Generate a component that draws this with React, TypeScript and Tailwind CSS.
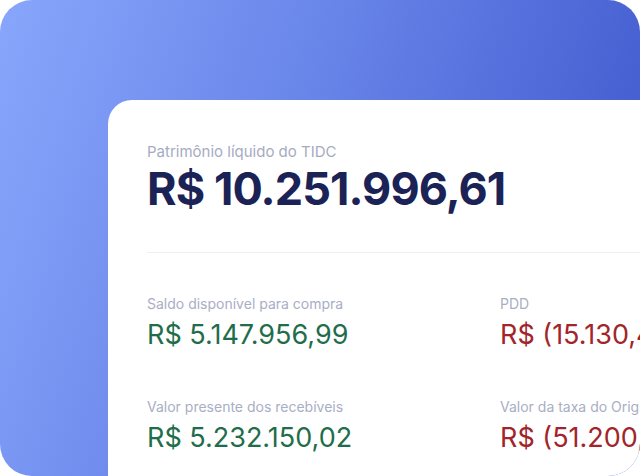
const metrics = [
  { label: "Saldo disponível para compra", value: "R$ 5.147.956,99", tone: "green" },
  { label: "PDD", value: "R$ (15.130,48)", tone: "red" },
  { label: "Valor presente dos recebíveis", value: "R$ 5.232.150,02", tone: "green" },
  { label: "Valor da taxa do Originador", value: "R$ (51.200,37)", tone: "red" },
];

export default function App() {
  return (
    <div className="h-[476px] w-[640px] overflow-hidden bg-white font-['Inter',sans-serif]">
      <div className="flex h-full flex-col overflow-hidden rounded-[32px] bg-[linear-gradient(108deg,#89a6fc_0%,#6683e8_45%,#3b52c9_100%)] pl-[108px] pt-[100px]">
        <section className="flex-1 overflow-hidden whitespace-nowrap rounded-tl-[24px] bg-white pl-[39px] pt-[42px]">
          <p className="text-[15px] leading-5 text-[#a6abc2]">Patrimônio líquido do TIDC</p>
          <p className="mt-[7px] text-[45px] font-bold leading-[40px] tracking-[-0.02em] text-[#1b2356]">
            R$ 10.251.996,61
          </p>

          <div className="mt-[43px] h-px bg-[#eef0f5]" />

          <div className="grid grid-cols-[353px_353px] gap-y-[47px] pt-[41px]">
            {metrics.map((m) => (
              <div key={m.label}>
                <p className="text-[14px] leading-5 text-[#a9aec4]">{m.label}</p>
                <p
                  className={
                    m.tone === "green"
                      ? "mt-[6px] text-[27px] leading-[30px] text-[#1f6d4b]"
                      : "mt-[6px] text-[27px] leading-[30px] text-[#a1252b]"
                  }
                >
                  {m.value}
                </p>
              </div>
            ))}
          </div>
        </section>
      </div>
    </div>
  );
}
